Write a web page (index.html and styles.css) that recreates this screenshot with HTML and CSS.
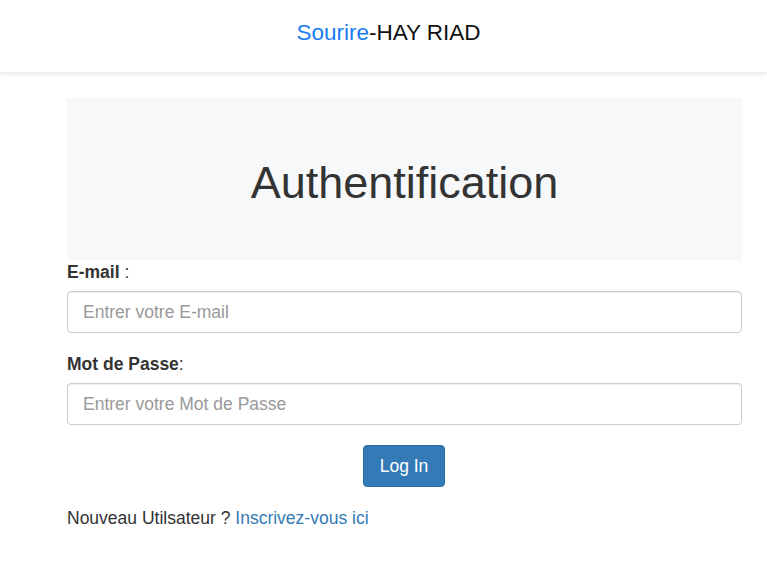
FILE: index.html
```html
<!DOCTYPE html>
<html lang="fr">
<head>
<meta charset="utf-8">
<title>Authentification</title>
<link rel="stylesheet" href="styles.css">
</head>
<body>
<header class="topbar">
  <span class="brand"><span class="brand-accent">Sourire</span>-HAY RIAD</span>
</header>
<main class="content">
  <section class="jumbo">
    <h1 class="jumbo-title">Authentification</h1>
  </section>
  <form class="login-form">
    <div class="field">
      <label class="field-label" for="email"><b>E-mail</b> :</label>
      <input class="field-input" id="email" type="email" placeholder="Entrer votre E-mail">
    </div>
    <div class="field">
      <label class="field-label" for="pwd"><b>Mot de Passe</b>:</label>
      <input class="field-input" id="pwd" type="password" placeholder="Entrer votre Mot de Passe">
    </div>
    <div class="actions">
      <button type="button" class="btn-primary">Log In</button>
    </div>
    <p class="signup">Nouveau Utilsateur ? <a href="#" class="signup-link">Inscrivez-vous ici</a></p>
  </form>
</main>
</body>
</html>
```
FILE: styles.css
```css
* { box-sizing: border-box; }
html, body {
  margin: 0;
  padding: 0;
  background: #fff;
  font-family: "Liberation Sans", Arial, sans-serif;
  color: #333;
  font-size: 17.5px;
}
.topbar {
  height: 73px;
  display: flex;
  align-items: center;
  justify-content: center;
  padding-left: 10px;
  background: #fff;
  box-shadow: 0 2px 4px rgba(0,0,0,0.08);
  border-bottom: 1px solid #eee;
}
.brand {
  font-size: 22.5px;
  color: #111;
  margin-top: -6px;
}
.brand-accent { color: #1a7cf0; }
.content {
  margin-left: 67px;
  width: 675px;
  padding-top: 25px;
}
.jumbo {
  background: #f7f8fa;
  height: 162px;
  display: flex;
  align-items: center;
  justify-content: center;
}
.jumbo-title {
  margin: 8px 0 0 0;
  font-size: 45px;
  font-weight: normal;
  color: #333;
}
.login-form { display: flex; flex-direction: column; }
.field { display: flex; flex-direction: column; }
.field-label {
  display: block;
  font-size: 17.5px;
  line-height: 22px;
  margin-top: 1px;
  margin-bottom: 8px;
  color: #333;
}
.field-label b { font-weight: bold; }
.field-input {
  width: 100%;
  height: 42px;
  border: 1px solid #ccc;
  border-radius: 4px;
  padding: 0 15px;
  font-family: inherit;
  font-size: 17.5px;
  color: #555;
  box-shadow: inset 0 1px 1px rgba(0,0,0,0.075);
  margin-bottom: 19px;
}
.field-input::placeholder { color: #999; }
.actions {
  display: flex;
  justify-content: center;
  margin-top: 1px;
  padding-right: 1px;
}
.btn-primary {
  width: 82px;
  height: 42px;
  background: #337ab7;
  border: 1px solid #2e6da4;
  border-radius: 4px;
  color: #fff;
  font-family: inherit;
  font-size: 17.5px;
}
.signup {
  margin: 20px 0 0 0;
  font-size: 17.5px;
  line-height: 22px;
}
.signup-link { color: #337ab7; text-decoration: none; }
```
